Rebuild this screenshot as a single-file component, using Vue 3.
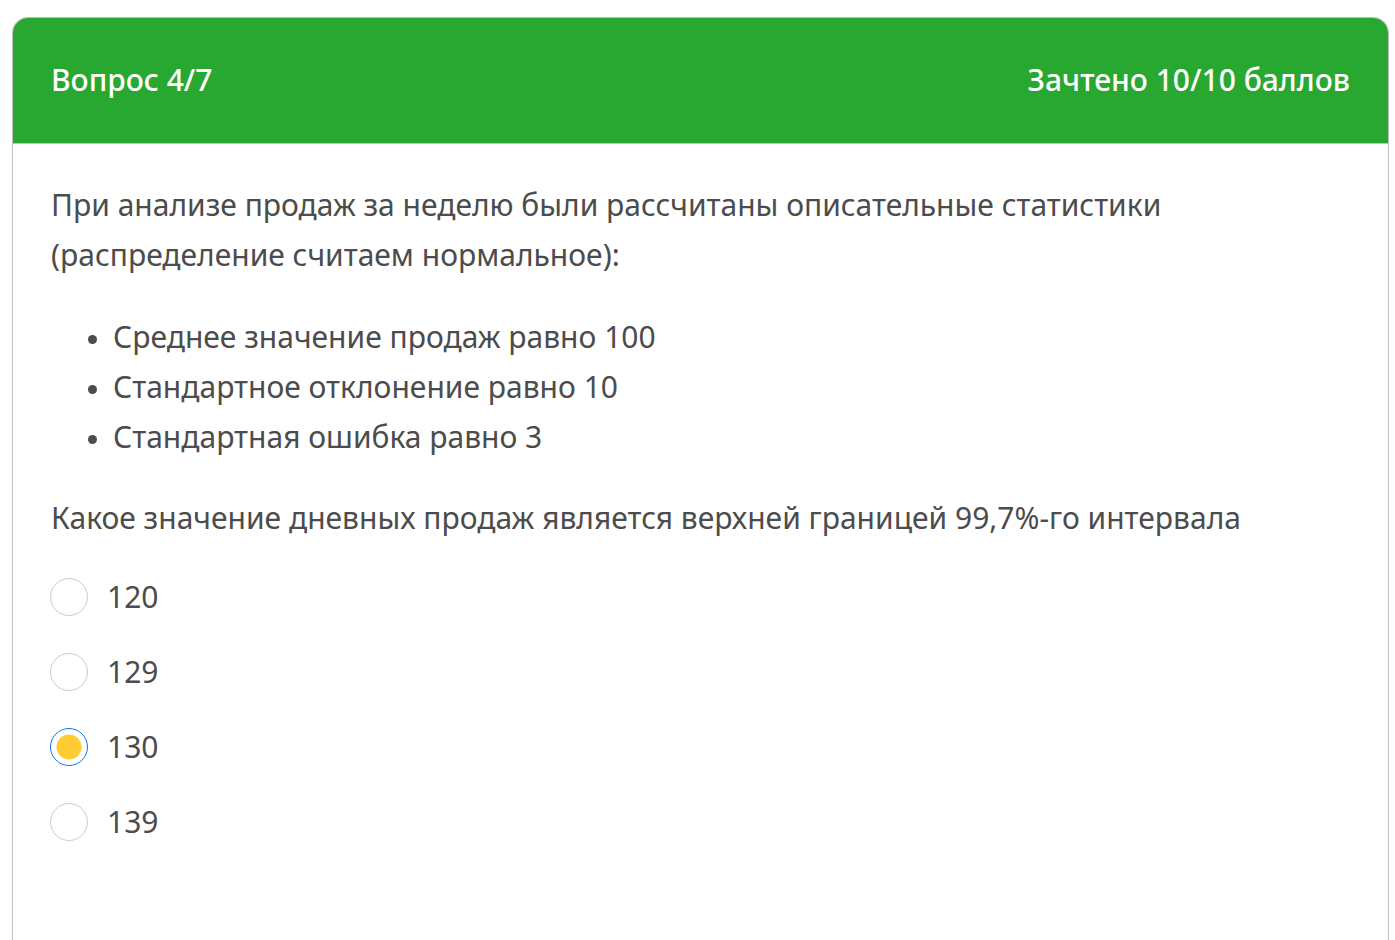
<script setup>
import { ref } from 'vue'

const facts = [
  'Среднее значение продаж равно 100',
  'Стандартное отклонение равно 10',
  'Стандартная ошибка равно 3',
]
const options = ['120', '129', '130', '139']
const answer = ref('130')
</script>

<template>
  <main class="page">
    <section class="card">
      <header class="head">
        <span>Вопрос 4/7</span>
        <span>Зачтено 10/10 баллов</span>
      </header>
      <div class="body">
        <p class="intro">При анализе продаж за неделю были рассчитаны описательные статистики<br />(распределение считаем нормальное):</p>
        <ul class="facts">
          <li v-for="fact in facts" :key="fact">{{ fact }}</li>
        </ul>
        <p id="question" class="question">Какое значение дневных продаж является верхней границей 99,7%-го интервала</p>
        <div class="options" role="radiogroup" aria-labelledby="question">
          <label v-for="option in options" :key="option" class="option">
            <input v-model="answer" class="radio" type="radio" name="answer" :value="option" />
            <span>{{ option }}</span>
          </label>
        </div>
      </div>
    </section>
  </main>
</template>

<style>
body {
  margin: 0;
  background: #fff;
}
</style>

<style scoped>
.page {
  box-sizing: border-box;
  min-height: 100vh;
  display: flex;
  padding: 17px 6px 0 12px;
  font-family: "Noto Sans", sans-serif;
  font-size: 30px;
  line-height: 50px;
  color: #4c4c4c;
}
.card {
  flex: 1;
  border: 1px solid #bfbfbf;
  border-bottom: 0;
  border-radius: 16px 16px 0 0;
  overflow: hidden;
}
.head {
  display: flex;
  justify-content: space-between;
  padding: 37px 38px 38px;
  border-bottom: 1px solid #bfbfbf;
  background: #28a830;
  color: #fff;
  font-weight: 500;
}
.body {
  padding: 36px 38px;
}
.intro,
.question {
  margin: 0;
}
.facts {
  margin: 32px 0 31px;
  padding-left: 62px;
}
.facts li::marker {
  font-size: 26px;
}
.options {
  display: flex;
  flex-direction: column;
  align-items: flex-start;
  gap: 25px;
  margin-top: 29px;
}
.option {
  display: flex;
  align-items: center;
  gap: 19px;
}
.radio {
  appearance: none;
  box-sizing: border-box;
  width: 38px;
  height: 38px;
  margin: 0 0 0 -1px;
  border: 1px solid #ccccd2;
  border-radius: 50%;
  background: #fff;
}
.radio:checked {
  border-color: #077bf0;
  background: radial-gradient(circle, #fc3 12px, #fff 13px);
}
</style>
